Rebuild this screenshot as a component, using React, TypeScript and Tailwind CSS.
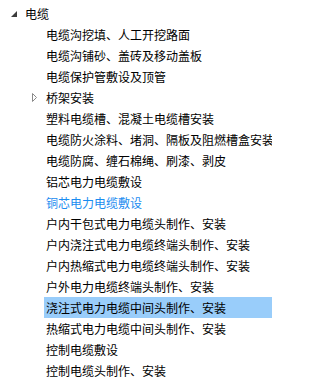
import React from 'react';

type Node = {
  label: string;
  level: number;
  expander?: 'open' | 'closed';
  selected?: boolean;
  link?: boolean;
};

const nodes: Node[] = [
  { label: '电缆', level: 0, expander: 'open' },
  { label: '电缆沟挖填、人工开挖路面', level: 1 },
  { label: '电缆沟铺砂、盖砖及移动盖板', level: 1 },
  { label: '电缆保护管敷设及顶管', level: 1 },
  { label: '桥架安装', level: 1, expander: 'closed' },
  { label: '塑料电缆槽、混凝土电缆槽安装', level: 1 },
  { label: '电缆防火涂料、堵洞、隔板及阻燃槽盒安装', level: 1 },
  { label: '电缆防腐、缠石棉绳、刷漆、剥皮', level: 1 },
  { label: '铝芯电力电缆敷设', level: 1 },
  { label: '铜芯电力电缆敷设', level: 1, link: true },
  { label: '户内干包式电力电缆头制作、安装', level: 1 },
  { label: '户内浇注式电力电缆终端头制作、安装', level: 1 },
  { label: '户内热缩式电力电缆终端头制作、安装', level: 1 },
  { label: '户外电力电缆终端头制作、安装', level: 1 },
  { label: '浇注式电力电缆中间头制作、安装', level: 1, selected: true },
  { label: '热缩式电力电缆中间头制作、安装', level: 1 },
  { label: '控制电缆敷设', level: 1 },
  { label: '控制电缆头制作、安装', level: 1 },
];

function Expander({ kind }: { kind?: 'open' | 'closed' }) {
  if (kind === 'open') {
    return (
      <svg width="6" height="6" viewBox="0 0 6 6" className="mt-[1px]">
        <path d="M6 0 L6 6 L0 6 Z" fill="#3c3c3c" />
      </svg>
    );
  }
  if (kind === 'closed') {
    return (
      <svg width="5" height="9" viewBox="0 0 5 9">
        <path d="M0.5 0.5 L4.5 4.5 L0.5 8.5 Z" fill="none" stroke="#8a8a8a" strokeWidth="1" />
      </svg>
    );
  }
  return null;
}

function TreeRow({ node }: { node: Node }) {
  const indent = node.level === 0 ? 'pl-[11px]' : 'pl-[32px]';
  return (
    <div className={`flex h-[21px] items-center ${indent}`}>
      <div className="flex w-[12px] shrink-0 items-center">
        <Expander kind={node.expander} />
      </div>
      <span
        className={`flex h-full flex-1 items-center whitespace-nowrap px-[2px] ${
          node.selected ? 'bg-[#99cdfa]' : ''
        } ${node.link ? 'text-[#1a8cf0]' : 'text-black'}`}
      >
        {node.label}
      </span>
    </div>
  );
}

export default function App() {
  return (
    <div
      className="h-[381px] w-[272px] overflow-hidden bg-white pt-[3px] text-[12px] leading-none"
      style={{ fontFamily: '"Noto Sans CJK SC", "Noto Sans", sans-serif' }}
    >
      {nodes.map((n) => (
        <TreeRow key={n.label} node={n} />
      ))}
    </div>
  );
}
